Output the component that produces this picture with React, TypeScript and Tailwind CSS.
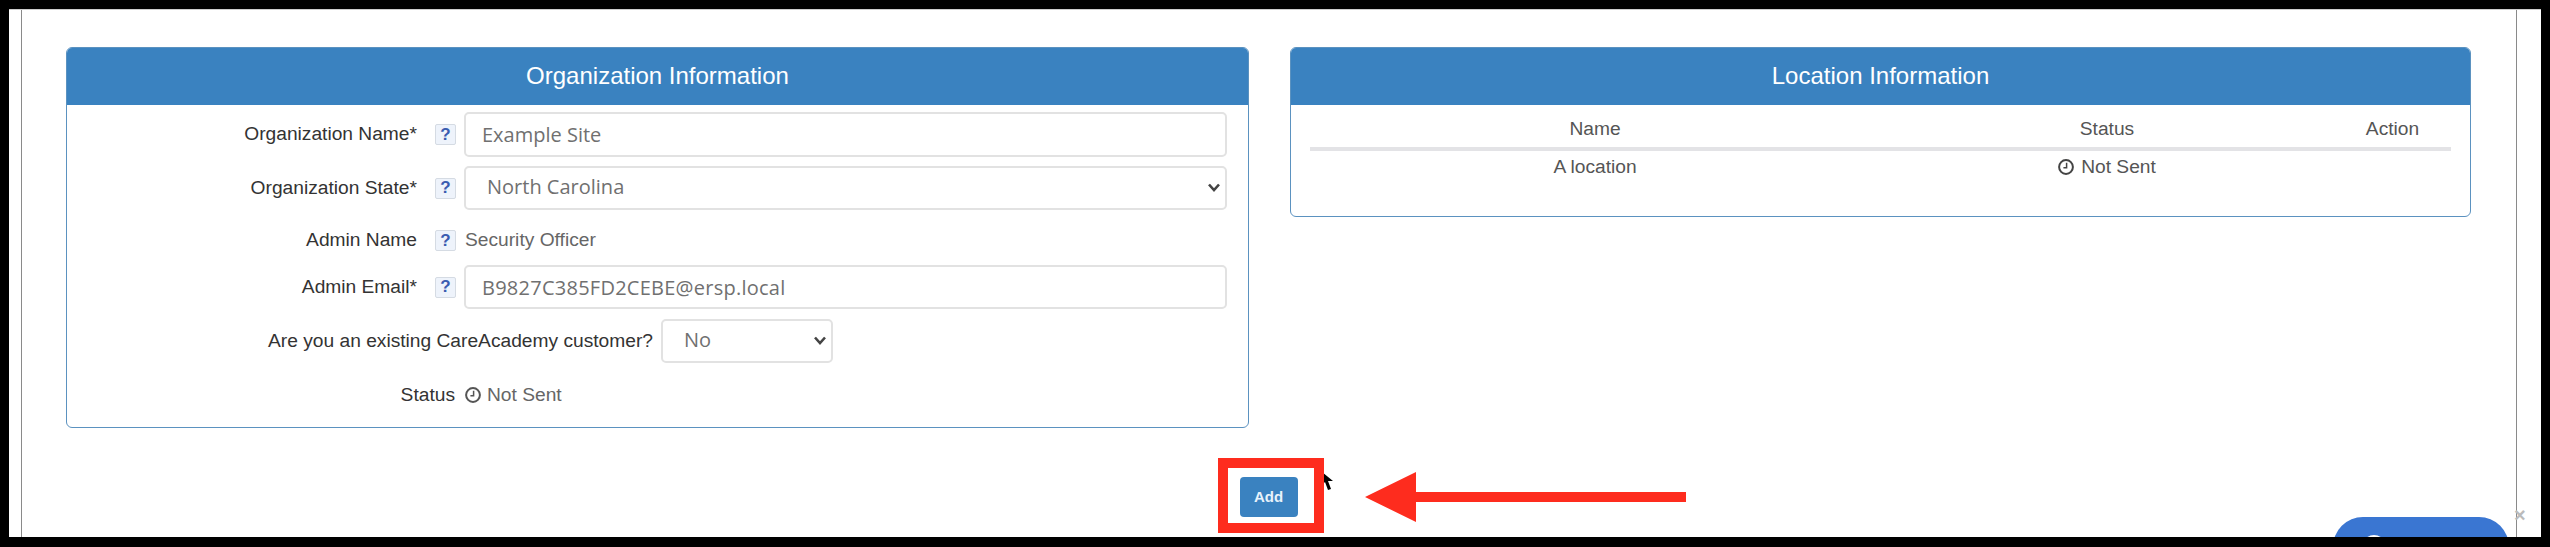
import React from "react";

const sans = "font-['Liberation_Sans',Arial,sans-serif]";
const wide = "font-['Open_Sans','Noto_Sans',sans-serif]";

function ClockIcon({ className }: { className?: string }) {
  return (
    <svg viewBox="0 0 16 16" className={className} fill="none" stroke="currentColor">
      <circle cx="8" cy="8" r="6.9" strokeWidth="2" />
      <path d="M8.6 3.8V8.8H5.4" strokeWidth="1.5" />
    </svg>
  );
}

function Help() {
  return (
    <span className={`flex h-[21px] w-[21px] shrink-0 items-center justify-center rounded-[2px] border border-[#d5dbe3] bg-[#eef3fb] text-[17px] font-bold text-[#3a5cb0] ${sans}`}>
      ?
    </span>
  );
}

function Row({ label, className, children }: { label: string; className: string; children: React.ReactNode }) {
  return (
    <div className={`flex items-center ${className}`}>
      <div className="w-[350px] shrink-0 text-right text-[19.2px] text-[#333]">{label}</div>
      <div className="ml-[18px] mr-[8px]">
        <Help />
      </div>
      {children}
    </div>
  );
}

function Panel({ title, children }: { title: string; children: React.ReactNode }) {
  return (
    <div className="overflow-hidden rounded-[6px] border-[1.5px] border-[#5b92c0] bg-white">
      <div className="flex h-[57px] items-center justify-center bg-[#3a82c0] pb-[2px] text-[24px] text-white">
        {title}
      </div>
      {children}
    </div>
  );
}

const field = `rounded-[5px] border-2 border-[#e2e2e2] bg-white text-[#707070] text-[20px] ${wide}`;

function Select({ value, className }: { value: string; className: string }) {
  return (
    <div className={`relative h-[44px] ${className}`}>
      <select className={`h-full w-full appearance-none pb-[2px] pl-[21px] ${field}`} defaultValue={value}>
        <option>{value}</option>
      </select>
      <svg className="absolute right-[7px] top-[17px] h-[9px] w-[12px] text-[#444]" viewBox="0 0 12 9" fill="none" stroke="currentColor" strokeWidth="2.6">
        <path d="M1 1.5L6 7L11 1.5" />
      </svg>
    </div>
  );
}

export default function App() {
  return (
    <div className={`relative h-[547px] w-[2550px] bg-black pb-[10px] pl-[9px] pr-[9px] pt-[9px] ${sans}`}>
      <div className="relative flex h-full overflow-hidden border-t border-[#ccc] bg-white">
        <div className="w-[12px] shrink-0" />
        <div className="flex-1 border-x border-[#8a8a8a] pl-[44px] pr-[45px] pt-[37px]">
          <div className="grid grid-cols-[1183px_1fr] items-start gap-[41px]">
            <Panel title="Organization Information">
              <div className="flex h-[322px] flex-col">
                <Row label="Organization Name*" className="mt-[7px] h-[45px]">
                  <input readOnly value="Example Site" className={`h-[45px] w-[763px] px-[16px] ${field}`} />
                </Row>
                <Row label="Organization State*" className="mt-[9px] h-[44px]">
                  <Select value="North Carolina" className="w-[763px]" />
                </Row>
                <Row label="Admin Name" className="mt-[9px] h-[43px]">
                  <span className="ml-[1px] text-[19.2px] text-[#666]">Security Officer</span>
                </Row>
                <Row label="Admin Email*" className="mt-[3px] h-[44px]">
                  <input readOnly value="B9827C385FD2CEBE@ersp.local" className={`h-[44px] w-[763px] px-[16px] tracking-[0.25px] ${field}`} />
                </Row>
                <div className="mt-[10px] flex h-[44px] items-center">
                  <div className="w-[586px] shrink-0 text-right text-[19.2px] text-[#333]">Are you an existing CareAcademy customer?</div>
                  <Select value="No" className="ml-[8px] w-[172px]" />
                </div>
                <div className="mt-[12px] flex h-[40px] items-center text-[19.2px]">
                  <div className="w-[388px] shrink-0 text-right text-[#333]">Status</div>
                  <ClockIcon className="ml-[10px] h-[16px] w-[16px] text-[#555]" />
                  <span className="ml-[6px] text-[#666]">Not Sent</span>
                </div>
              </div>
            </Panel>
            <Panel title="Location Information">
              <div className="h-[111px] pl-[19px] pr-[19px] pt-[6px] text-[19.2px] text-[#555]">
                <div className="box-content grid h-[35px] grid-cols-[570px_454px_1fr] items-center border-b-[4px] border-[#e3e3e6] pt-[1px] text-center">
                  <span>Name</span>
                  <span>Status</span>
                  <span>Action</span>
                </div>
                <div className="grid h-[33px] grid-cols-[570px_454px_1fr] items-center text-center">
                  <span>A location</span>
                  <span className="flex items-center justify-center gap-[7px]">
                    <ClockIcon className="h-[16px] w-[16px] text-[#444]" />
                    Not Sent
                  </span>
                  <span />
                </div>
              </div>
            </Panel>
          </div>
          <div className="mt-[49px] flex justify-center">
            <button className="flex h-[40px] w-[58px] items-center justify-center rounded-[4px] bg-[#3a82c0] text-[15px] font-bold text-[#e8f2fb]">
              Add
            </button>
          </div>
        </div>
        <div className="w-[24px] shrink-0" />
        <div className="absolute left-[2324px] top-[507px] h-[60px] w-[176px] rounded-[30px] bg-[#3a76d2]">
          <div className="absolute left-[29px] top-[18px] h-[24px] w-[24px] rounded-full bg-white" />
        </div>
        <span className="absolute left-[2505px] top-[495px] text-[20px] font-bold leading-[20px] text-[#bbb]">×</span>
      </div>

      {/* annotations drawn on top of the screenshot */}
      <svg className="absolute left-[1322px] top-[472px] h-[20px] w-[12px]" viewBox="0 0 12 20">
        <path d="M0 0V13L3 10L6 18L9 17L6 9H11Z" fill="#000" />
      </svg>
      <div className="absolute left-[1218px] top-[458px] h-[75px] w-[106px] border-[10px] border-[#fe2c1e]" />
      <svg className="absolute left-[1365px] top-[472px] h-[50px] w-[321px]" viewBox="0 0 321 50">
        <path d="M0 25L51 0V20H321V30H51V50Z" fill="#fe2c1e" />
      </svg>
    </div>
  );
}
